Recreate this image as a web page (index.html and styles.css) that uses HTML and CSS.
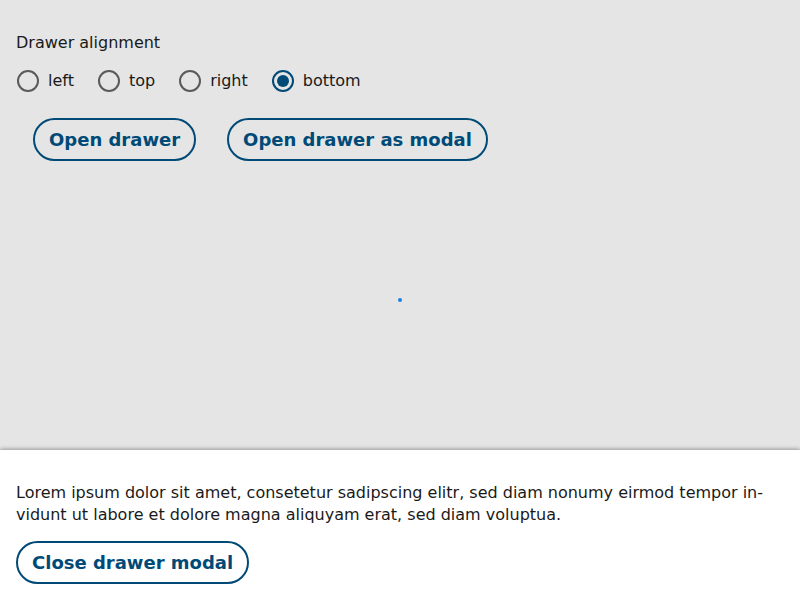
FILE: index.html
```html
<!DOCTYPE html>
<html lang="en">
<head>
<meta charset="utf-8">
<link rel="stylesheet" href="styles.css">
</head>
<body>
<main class="page">
  <fieldset class="align">
    <legend class="align-label">Drawer alignment</legend>
    <div class="radios">
      <label class="radio"><span class="circle"></span>left</label>
      <label class="radio"><span class="circle"></span>top</label>
      <label class="radio"><span class="circle"></span>right</label>
      <label class="radio checked"><span class="circle"></span>bottom</label>
    </div>
  </fieldset>
  <div class="actions">
    <button class="btn">Open drawer</button>
    <button class="btn">Open drawer as modal</button>
  </div>
  <div class="spinner"></div>
</main>
<aside class="drawer">
  <p class="drawer-text">Lorem ipsum dolor sit amet, consetetur sadipscing elitr, sed diam nonumy eirmod tempor in&shy;vidunt ut labore et dolore magna aliquyam erat, sed diam voluptua.</p>
  <button class="btn">Close drawer modal</button>
</aside>
</body>
</html>
```
FILE: styles.css
```css
html, body {
  margin: 0;
  padding: 0;
  height: 100%;
}
body {
  background: #e5e5e5;
  font-family: "DejaVu Sans", Verdana, sans-serif;
  font-size: 16px;
  color: #1a1a1a;
  display: flex;
  flex-direction: column;
  overflow: hidden;
}
.page {
  flex: 1;
  position: relative;
  padding: 32px 16px 0;
}
.align {
  border: 0;
  margin: 0;
  padding: 0;
}
.align-label {
  padding: 0;
  line-height: 22px;
}
.radios {
  display: flex;
  gap: 23px;
  margin-top: 15px;
}
.radio {
  display: flex;
  align-items: center;
  gap: 9px;
  line-height: 24px;
}
.circle {
  width: 22px;
  height: 22px;
  border: 2px solid #5a5a5a;
  border-radius: 50%;
  box-sizing: border-box;
  display: flex;
  align-items: center;
  justify-content: center;
  margin-left: 1px;
}
.checked .circle {
  border-color: #004a77;
}
.checked .circle::after {
  content: "";
  width: 12px;
  height: 12px;
  border-radius: 50%;
  background: #004a77;
}
.actions {
  display: flex;
  gap: 31px;
  margin-top: 25px;
  padding-left: 17px;
}
.btn {
  font-family: "DejaVu Sans", Verdana, sans-serif;
  font-weight: bold;
  font-size: 18px;
  color: #004a77;
  background: transparent;
  border: 2px solid #004a77;
  border-radius: 22px;
  height: 43px;
  padding: 0 14px;
}
.spinner {
  position: absolute;
  left: 398px;
  top: 298px;
  width: 4px;
  height: 4px;
  border-radius: 50%;
  background: #1a7fe8;
}
.drawer {
  height: 150px;
  box-sizing: border-box;
  background: #fff;
  box-shadow: 0 -1px 4px rgba(0,0,0,0.35);
  padding: 32px 16px 16px;
}
.drawer-text {
  margin: 0 0 15px;
  line-height: 22px;
  hyphens: manual;
}
.drawer .btn {
  background: #fff;
}
```
